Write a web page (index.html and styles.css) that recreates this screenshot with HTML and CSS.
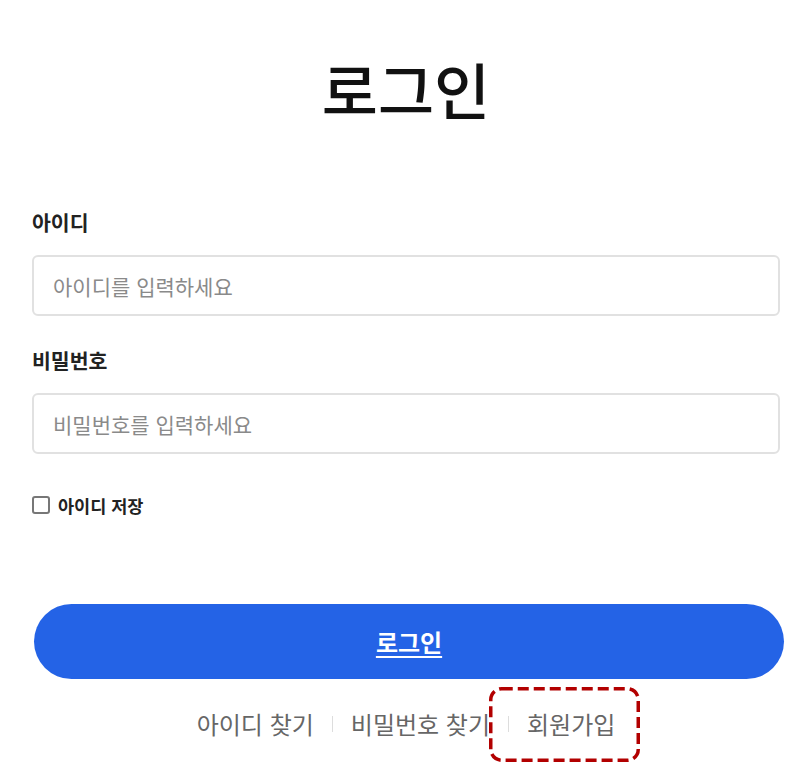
FILE: index.html
```html
<!DOCTYPE html>
<html lang="ko">
<head>
    <meta charset="utf-8">
    <title>로그인</title>
    <meta name="viewport" content="width=device-width, initial-scale=1">
    <link rel="stylesheet" href="styles.css">
</head>
<body>
    <main class="login">
        <h1 class="login-title">로그인</h1>

        <form class="login-form">
            <label class="field-label" for="user-id">아이디</label>
            <input class="field-input" id="user-id" type="text" placeholder="아이디를 입력하세요">

            <label class="field-label" for="user-pw">비밀번호</label>
            <input class="field-input" id="user-pw" type="password" placeholder="비밀번호를 입력하세요">

            <label class="remember">
                <input type="checkbox" class="remember-box">
                <span>아이디 저장</span>
            </label>

            <button type="submit" class="login-button">로그인</button>
        </form>

        <!-- 하단 링크 -->
        <nav class="login-links">
            <a href="#">아이디 찾기</a>
            <span class="sep"></span>
            <a href="#">비밀번호 찾기</a>
            <span class="sep"></span>
            <a href="#" class="join">회원가입
                <svg class="highlight" width="151" height="75" viewBox="0 0 151 75">
                    <rect x="1.75" y="1.75" width="147.5" height="71.5" rx="11" fill="none" stroke="#b20000" stroke-width="3.5" stroke-dasharray="11 5"/>
                </svg>
            </a>
        </nav>
    </main>
</body>
</html>
```

FILE: styles.css
```css
/* 기본 */
html, body {
    margin: 0;
    background-color: #ffffff;
    color: #222222;
    font-family: "Noto Sans CJK KR", "Noto Sans", sans-serif;
}

body {
    min-height: 100vh;
}

.login {
    padding: 52px 32px 0 32px;
}

.login-title {
    margin: 0;
    text-align: center;
    font-size: 61px;
    line-height: 74px;
    font-weight: 500;
    color: #111111;
}

/* 입력 폼 */
.login-form {
    display: flex;
    flex-direction: column;
    margin-top: 83px;
}

.field-label {
    font-size: 20.5px;
    line-height: 26px;
    font-weight: 700;
    color: #222222;
    margin-bottom: 20px;
}

.field-input {
    box-sizing: border-box;
    height: 61px;
    width: 100%;
    padding: 0 19px;
    border: 2px solid #e1e1e1;
    border-radius: 6px;
    font-family: inherit;
    font-size: 21px;
    color: #333333;
    outline: none;
    margin-bottom: 31px;
}

.field-input::placeholder {
    color: #8a8a8a;
}

#user-pw {
    margin-bottom: 36px;
}

.remember {
    display: flex;
    align-items: center;
    gap: 8px;
    font-size: 17.5px;
    font-weight: 700;
    color: #222222;
    height: 30px;
}

.remember-box {
    appearance: none;
    margin: 0;
    width: 18px;
    height: 18px;
    border: 2px solid #777777;
    border-radius: 3px;
    box-sizing: border-box;
    background: #ffffff;
}

.login-button {
    margin: 84px -4px 0 2px;
    height: 75px;
    border: none;
    border-radius: 38px;
    background-color: #2463e6;
    color: #ffffff;
    font-family: inherit;
    font-size: 24px;
    font-weight: 700;
    text-decoration: underline;
    text-underline-offset: 4px;
    cursor: pointer;
}

/* 하단 링크 */
.login-links {
    display: flex;
    justify-content: center;
    align-items: center;
    gap: 18px;
    margin-top: 28px;
    padding-bottom: 24px;
    font-size: 24px;
    line-height: 34px;
}

.login-links a {
    color: #666666;
    text-decoration: none;
}

.sep {
    width: 1px;
    height: 16px;
    background-color: #dddddd;
}

.join {
    position: relative;
}

.highlight {
    position: absolute;
    left: -38px;
    top: -20px;
}
```
